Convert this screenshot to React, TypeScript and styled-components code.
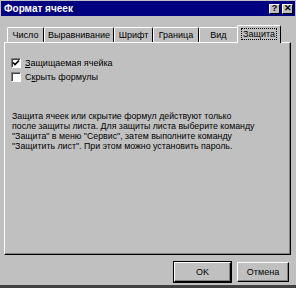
import styled, { createGlobalStyle } from "styled-components";

const GlobalStyle = createGlobalStyle`
  html, body {
    margin: 0;
    padding: 0;
    background: #c0c0c0;
  }
  body {
    font-family: "Liberation Sans", Arial, sans-serif;
    font-size: 9px;
    color: #000;
  }
`;

const Window = styled.div`
  width: 296px;
  height: 288px;
  background: #c0c0c0;
  display: flex;
  flex-direction: column;
  box-sizing: border-box;
  border-bottom: 3px solid #404040;
  padding-top: 1px;
`;

const TitleBar = styled.div`
  height: 15px;
  margin: 0 1px;
  background: #000080;
  display: flex;
  align-items: center;
  justify-content: space-between;
  padding: 0 2px 0 3px;
`;

const Title = styled.span`
  color: #fff;
  font-weight: bold;
  font-size: 10px;
`;

const TitleButtons = styled.div`
  display: flex;
  gap: 2px;
`;

const TitleButton = styled.div`
  width: 11px;
  height: 10px;
  background: #c0c0c0;
  box-sizing: border-box;
  border-top: 1px solid #fff;
  border-left: 1px solid #fff;
  border-right: 1px solid #000;
  border-bottom: 1px solid #000;
  display: flex;
  align-items: center;
  justify-content: center;
  font-weight: bold;
  font-size: 9px;
  line-height: 1;
`;

const Body = styled.div`
  flex: 1;
  display: flex;
  flex-direction: column;
  padding: 8px 5px 0 4px;
`;

const TabStrip = styled.div`
  display: flex;
  align-items: flex-end;
  height: 18px;
  padding-left: 3px;
  position: relative;
  z-index: 1;
`;

const Tab = styled.div<{ $active?: boolean; $width: number }>`
  width: ${p => p.$width}px;
  height: ${p => (p.$active ? 18 : 15)}px;
  box-sizing: border-box;
  background: #c0c0c0;
  border-top: 1px solid #fff;
  border-left: 1px solid #fff;
  border-right: 1px solid #000;
  border-radius: 2px 2px 0 0;
  margin-bottom: ${p => (p.$active ? -1 : 0)}px;
  margin-left: ${p => (p.$active ? -1 : 0)}px;
  display: flex;
  align-items: center;
  justify-content: center;
  padding-bottom: ${p => (p.$active ? 2 : 0)}px;
`;

const TabLabel = styled.span<{ $focus?: boolean }>`
  padding: 0 1px;
  outline: ${p => (p.$focus ? "1px dotted #000" : "none")};
`;

const Panel = styled.div`
  height: 213px;
  box-sizing: border-box;
  border-top: 1px solid #fff;
  border-left: 1px solid #fff;
  border-right: 1px solid #000;
  border-bottom: 1px solid #000;
  box-shadow: inset -1px -1px 0 #808080;
  padding: 13px 6px 0 6px;
  display: flex;
  flex-direction: column;
`;

const CheckRow = styled.label`
  display: flex;
  align-items: center;
  gap: 4px;
  height: 14px;
`;

const Box = styled.span`
  width: 10px;
  height: 10px;
  box-sizing: border-box;
  background: #fff;
  border-top: 1px solid #808080;
  border-left: 1px solid #808080;
  border-right: 1px solid #fff;
  border-bottom: 1px solid #fff;
  box-shadow: inset 1px 1px 0 #404040;
  display: flex;
  align-items: center;
  justify-content: center;
`;

const Underline = styled.span`
  text-decoration: underline;
`;

const Note = styled.p`
  margin: 27px 0 0 1px;
  line-height: 10px;
  font-size: 8.8px;
  white-space: pre-line;
`;

const Footer = styled.div`
  display: flex;
  justify-content: flex-end;
  gap: 6px;
  padding: 7px 2px 0 0;
`;

const Button = styled.button<{ $default?: boolean }>`
  width: ${p => (p.$default ? 57 : 52)}px;
  height: 20px;
  background: #c0c0c0;
  font-family: inherit;
  font-size: 9px;
  color: #000;
  padding: 0;
  box-sizing: border-box;
  border-top: 1px solid #fff;
  border-left: 1px solid #fff;
  border-right: 1px solid #000;
  border-bottom: 1px solid #000;
  box-shadow: ${p =>
    p.$default
      ? "0 0 0 1px #000, inset -1px -1px 0 #808080"
      : "inset -1px -1px 0 #808080"};
`;

const CheckMark = () => (
  <svg width="8" height="8" viewBox="0 0 8 8">
    <path d="M1 3.5 L3 5.5 L7 1.5" stroke="#000" strokeWidth="1.6" fill="none" />
  </svg>
);

const tabs = [
  { label: "Число", width: 37 },
  { label: "Выравнивание", width: 70 },
  { label: "Шрифт", width: 39 },
  { label: "Граница", width: 46 },
  { label: "Вид", width: 39 },
  { label: "Защита", width: 44, active: true },
];

export default function App() {
  return (
    <>
      <GlobalStyle />
      <Window>
        <TitleBar>
          <Title>Формат ячеек</Title>
          <TitleButtons>
            <TitleButton>?</TitleButton>
            <TitleButton>✕</TitleButton>
          </TitleButtons>
        </TitleBar>
        <Body>
          <TabStrip>
            {tabs.map(t => (
              <Tab key={t.label} $active={t.active} $width={t.width}>
                <TabLabel $focus={t.active}>{t.label}</TabLabel>
              </Tab>
            ))}
          </TabStrip>
          <Panel>
            <CheckRow>
              <Box><CheckMark /></Box>
              <span><Underline>З</Underline>ащищаемая ячейка</span>
            </CheckRow>
            <CheckRow>
              <Box />
              <span>С<Underline>к</Underline>рыть формулы</span>
            </CheckRow>
            <Note>
              {"Защита ячеек или скрытие формул действуют только\nпосле защиты листа. Для защиты листа выберите команду\n\"Защита\" в меню \"Сервис\", затем выполните команду\n\"Защитить лист\". При этом можно установить пароль."}
            </Note>
          </Panel>
          <Footer>
            <Button $default>OK</Button>
            <Button>Отмена</Button>
          </Footer>
        </Body>
      </Window>
    </>
  );
}
